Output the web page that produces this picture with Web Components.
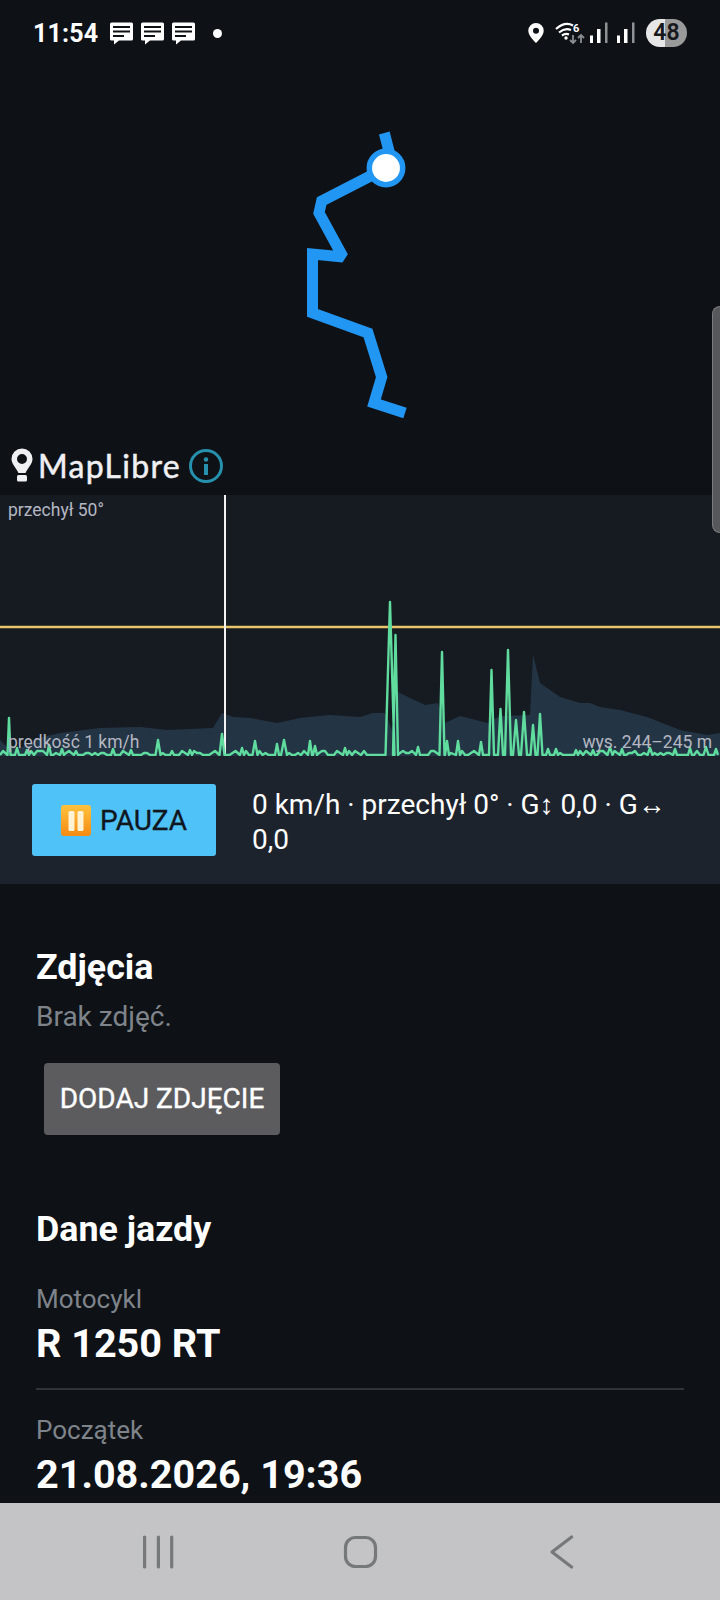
<!DOCTYPE html>
<html>
<head>
<meta charset="utf-8">
<style>
    html, body { margin: 0; height: 100%; background: #0e1217; }
    body { font-family: Roboto, "Liberation Sans", sans-serif; overflow: hidden; }
    #screen { display: flex; flex-direction: column; height: 1600px; width: 720px; position: relative; }
</style>
</head>
<body>
<div id="screen">
    <status-bar></status-bar>
    <route-map></route-map>
    <ride-chart></ride-chart>
    <ride-controls></ride-controls>
    <ride-details>
        <photo-section></photo-section>
        <detail-heading>Dane jazdy</detail-heading>
        <detail-row label="Motocykl" value="R 1250 RT" divider></detail-row>
        <detail-row label="Początek" value="21.08.2026, 19:36"></detail-row>
    </ride-details>
    <nav-bar></nav-bar>
    <scroll-thumb></scroll-thumb>
</div>

<script>
// little helper so every element is just template + shadow root
function define(name, html) {
    const template = document.createElement('template');
    template.innerHTML = html;
    customElements.define(name, class extends HTMLElement {
        constructor() {
            super();
            this.attachShadow({ mode: 'open' }).appendChild(template.content.cloneNode(true));
        }
    });
}

const msgIcon = `<svg width="25" height="23" viewBox="0 0 25 23"><path fill="#fff" d="M2.500 0.500h20A1.500 1.500 0 0 1 24 2v15a1.500 1.500 0 0 1-1.500 1.500H10l-5 4v-4h-2A1.500 1.500 0 0 1 1 17V2A1.500 1.500 0 0 1 2.500 0.500z"/><path stroke="#0e1217" stroke-width="2" d="M4 5h17M4 9.500h17M4 14h11"/></svg>`;

const bars = `<svg width="18" height="24" viewBox="0 0 18 24"><path fill="#fff" d="M0 14.500h3v7.500h-3zM7 8h3.500v14h-3.500z"/><path fill="#8f9295" d="M15 1.500h2.500v20.500h-2.500z"/></svg>`;

define('status-bar', `
    <style>
        :host { display: flex; align-items: center; height: 66px; padding: 0 33px; color: #fff; font-weight: 700; font-size: 25px; flex: none; box-sizing: border-box; }
        .time { margin-right: 11px; letter-spacing: .2px; }
        .msgs { display: flex; gap: 6px; align-items: center; }
        .dot { width: 9px; height: 9px; border-radius: 50%; background: #fff; margin-left: 17px; }
        .right { margin-left: auto; display: flex; align-items: center; }
        .batt { margin-left: 11px; width: 41px; height: 28px; border-radius: 14px; overflow: hidden; background: linear-gradient(90deg, #e6e6e6 0 47%, #9a9a9a 47%); color: #17191c; font-size: 23px; line-height: 28px; text-align: center; font-weight: 600; }
        svg { display: block; }
    </style>
    <span class="time">11:54</span>
    <span class="msgs">${msgIcon}${msgIcon}${msgIcon}</span>
    <span class="dot"></span>
    <span class="right">
        <svg width="20" height="24" viewBox="0 0 20 24" style="margin-right:9px"><path fill="#fff" fill-rule="evenodd" d="M10 2a7.700 7.700 0 0 1 7.700 7.700c0 4.300-4.400 8.800-7.700 12.300-3.300-3.500-7.700-8-7.700-12.300A7.700 7.700 0 0 1 10 2zm0 4.800a3 3 0 1 0 0 6 3 3 0 0 0 0-6z"/></svg>
        <svg width="30" height="24" viewBox="0 0 30 24" style="margin-right:5px">
            <path fill="none" stroke="#fff" stroke-width="2.200" d="M1 8Q10 0 18 4.500M4 11.500Q10 6.500 16 9M7 14.500Q10.500 12 14 13.500"/>
            <circle cx="11" cy="17" r="1.700" fill="#fff"/>
            <text x="18" y="11" font-size="11" font-weight="700" fill="#fff" font-family="Roboto">6</text>
            <path fill="none" stroke="#8a8d90" stroke-width="1.800" d="M18 14v8M15 19l3 3 3-3M26 22v-8M23 17l3-3 3 3"/>
        </svg>
        <span style="margin-right:9px">${bars}</span>
        ${bars}
        <span class="batt">48</span>
    </span>
`);

define('route-map', `
    <style>
        :host { display: block; position: relative; height: 429px; flex: none; background: #0e1217; }
        svg { position: absolute; left: 0; top: 0; }
        .logo { position: absolute; left: 9px; top: 380px; display: flex; align-items: center; }
        .name { font-family: "Lato", sans-serif; color: #f0f0f2; font-size: 32px; letter-spacing: 1.300px; -webkit-text-stroke: .5px #f0f0f2; margin-left: 3px; line-height: 40px; }
    </style>
    <svg width="720" height="429" viewBox="0 66 720 429">
        <path fill="none" stroke="#2196f3" stroke-width="11" stroke-miterlimit="2" d="M384.300 133L390 155M386 168L321.700 201L319 213L343 257L312.500 254V313L368 333L381.700 377L374 403L405 413"/>
        <circle cx="386" cy="168" r="16.700" fill="#fff" stroke="#2196f3" stroke-width="5.500"/>
    </svg>
    <div class="logo">
        <svg style="position:static" width="26" height="36" viewBox="0 0 26 36"><path fill="#f0f0f2" fill-rule="evenodd" d="M13 0.500a10.500 10.500 0 0 1 10.500 10.500c0 5-4.500 8.500-7 14h-7c-2.500-5.500-7-9-7-14A10.500 10.500 0 0 1 13 0.500zm0 5.500a5 5 0 1 0 0 10 5 5 0 0 0 0-10z"/><rect x="8" y="27" width="10" height="6.500" rx="1.500" fill="#f0f0f2"/></svg>
        <span class="name">MapLibre</span>
        <svg style="position:static;margin-left:7px" width="36" height="36" viewBox="0 0 36 36"><circle cx="18" cy="18" r="15.500" fill="none" stroke="#2690ad" stroke-width="3"/><circle cx="18" cy="11.500" r="2.200" fill="#2690ad"/><path d="M18 16v11" stroke="#2690ad" stroke-width="4"/></svg>
    </div>
`);

define('ride-chart', `
    <style>
        :host { display: block; position: relative; height: 261px; flex: none; background: #161b22; font-size: 17.500px; color: #b4b7c2; }
        svg { display: block; position: absolute; left: 0; top: 0; }
        span { position: absolute; line-height: 20px; white-space: nowrap; }
        .tilt { left: 8px; top: 5px; }
        .speed { left: 8px; top: 237px; }
        .alt { right: 8px; top: 237px; }
    </style>
    <svg width="720" height="261" viewBox="0 495 720 261" id="plot">
        <path id="alt" fill="#233545"/>
        <path d="M0 627H720" stroke="#e9c46a" stroke-width="2.600"/>
        <path d="M225 495V756" stroke="#f2f2f2" stroke-width="2"/>
        <path id="speed" fill="none" stroke="#5fdc9e" stroke-width="2.400" stroke-linejoin="round"/>
    </svg>
    <span class="tilt">przechył 50°</span>
    <span class="speed">prędkość 1 km/h</span>
    <span class="alt">wys. 244–245 m</span>
`);

define('ride-controls', `
    <style>
        :host { display: flex; align-items: center; gap: 36px; height: 128px; padding: 0 32px; background: #1d232d; flex: none; box-sizing: border-box; color: #fff; }
        button { all: unset; box-sizing: border-box; flex: none; display: flex; align-items: center; justify-content: center; gap: 9px; width: 184px; height: 72px; background: #4fc3f7; border-radius: 3px; color: #10161d; font: 400 28px Roboto, sans-serif; -webkit-text-stroke: .35px #10161d; }
        p { margin: 3px 0 0; font-size: 28px; line-height: 35px; }
    </style>
    <button>
        <svg width="30" height="31" viewBox="0 0 30 31"><defs><linearGradient id="o" x1="0" y1="0" x2="0" y2="1"><stop offset="0" stop-color="#ffc23d"/><stop offset="1" stop-color="#f58a12"/></linearGradient></defs><rect width="30" height="31" rx="3" fill="url(#o)"/><rect x="7.500" y="6" width="6" height="20" rx="1.500" fill="#fff3d6"/><rect x="16.500" y="6" width="6" height="20" rx="1.500" fill="#fff3d6"/></svg>
        PAUZA
    </button>
    <p>0 km/h · przechył 0° · G↕ 0,0 · G↔ 0,0</p>
`);

define('ride-details', `
    <style>
        :host { display: block; flex: 1; min-height: 0; overflow: hidden; padding: 0 36px; background: #0e1217; color: #fff; }
    </style>
    <slot></slot>
`);

define('photo-section', `
    <style>
        :host { display: block; padding-top: 61px; }
        h2 { margin: 0; font-size: 35.800px; line-height: 44px; font-weight: 700; }
        p { margin: 10px 0 0; font-size: 28px; line-height: 36px; color: #7f848b; }
        button { all: unset; display: block; box-sizing: border-box; margin: 28px 0 0 8px; width: 236px; height: 72px; text-align: center; background: #5c5c5f; border-radius: 4px; font: 400 28px/72px Roboto, sans-serif; -webkit-text-stroke: .35px #fff; color: #fff; }
    </style>
    <h2>Zdjęcia</h2>
    <p>Brak zdjęć.</p>
    <button>DODAJ ZDJĘCIE</button>
`);

define('detail-heading', `
    <style>
        :host { display: block; margin-top: 72px; font-size: 35.800px; line-height: 44px; font-weight: 700; }
    </style>
    <slot></slot>
`);

class DetailRow extends HTMLElement {
    constructor() {
        super();
        const shadow = this.attachShadow({ mode: 'open' });
        shadow.innerHTML = `
            <style>
                :host { display: block; margin-top: 23px; }
                :host([divider]) { margin-top: 31px; border-bottom: 2px solid #30343a; padding-bottom: 21px; }
                .label { font-size: 26px; line-height: 34px; color: #7f848b; }
                .value { margin-top: 5px; font-size: 39.600px; line-height: 46px; font-weight: 700; }
            </style>
            <div class="label">${this.getAttribute('label')}</div>
            <div class="value">${this.getAttribute('value')}</div>`;
    }
}
customElements.define('detail-row', DetailRow);

define('nav-bar', `
    <style>
        :host { display: block; height: 97px; flex: none; background: #c4c4c6; }
        svg { display: block; }
    </style>
    <svg width="720" height="97" viewBox="0 1503 720 97" fill="none" stroke="#77787a" stroke-width="3.200" stroke-linecap="round" stroke-linejoin="round">
        <path d="M144.600 1537v30M158.400 1537v30M171.700 1537v30"/>
        <rect x="345.500" y="1537.500" width="30" height="29" rx="10"/>
        <path d="M571.600 1537L552 1552L571.600 1567"/>
    </svg>
`);

define('scroll-thumb', `
    <style>
        :host { display: block; position: absolute; right: 0; top: 306px; width: 8px; height: 227px; background: #57585a; border: 1px solid #7a7b7e; border-right: 0; border-radius: 8px 0 0 8px; box-sizing: border-box; }
    </style>
`);

// chart data - spikes are read off the reference, the rest is small noise
const altPoints = [[0,740],[8,748],[20,748],[43,737],[60,733],[100,728],[140,727],[167,730],[213,728],[222,713],[233,717],[250,718],[277,723],[300,718],[330,715],[360,717],[373,713],[385,713],[392,730],[398,692],[410,698],[425,705],[438,703],[445,723],[460,716],[488,723],[500,716],[530,715],[533,655],[540,683],[560,697],[580,703],[590,703],[600,707],[620,710],[647,717],[680,730],[707,735],[720,733]];
// [x, height, half width]
const spikes = [[9,37,1.500],[17,7,2],[27,5,2],[49,10,2],[62,6,2],[76,4,2],[113,6,2],[131,5,2],[158,15,2.500],[172,4,2],[190,5,2],[222,21,2.500],[242,7,2],[255,14,2.500],[277,11,2],[284,15,3],[310,14,2],[315,9,2],[345,7,2],[390,153,4.500],[395.500,120,2.500],[418,8,2],[442,103,2.500],[447,14,2],[458,14,2],[481,13,2],[491.500,85,2.500],[500.500,46,2.500],[508,105,3],[516,35,3],[524,43,3],[533,30,2.500],[540,41,2.500],[548,6,2],[556,6,2],[576,5,2],[593,5,2],[610,8,2.500],[622,6,2],[650,7,2.500],[675,6,2],[690,7,2],[706,8,2.500],[716,6,2]];

const plot = document.querySelector('ride-chart').shadowRoot;
plot.getElementById('alt').setAttribute('d', 'M' + altPoints.map(p => p.join(' ')).join('L') + 'L720 756L0 756Z');

const pts = [];
let seed = 7, cursor = 0;
for (const [sx, h, w] of spikes) {
    // noise up to the next spike
    while (cursor + 3 < sx - w) {
        seed = (seed * 73 + 11) % 101;
        pts.push([cursor, 755 - (seed % 4 === 0 ? 4 : seed % 3 === 0 ? 2 : 0)]);
        cursor += 3;
    }
    pts.push([sx - w, 755], [sx, 755 - h], [sx + w, 755]);
    cursor = sx + w + 2;
}
plot.getElementById('speed').setAttribute('d', 'M' + pts.map(p => p.join(' ')).join('L'));
</script>
</body>
</html>
